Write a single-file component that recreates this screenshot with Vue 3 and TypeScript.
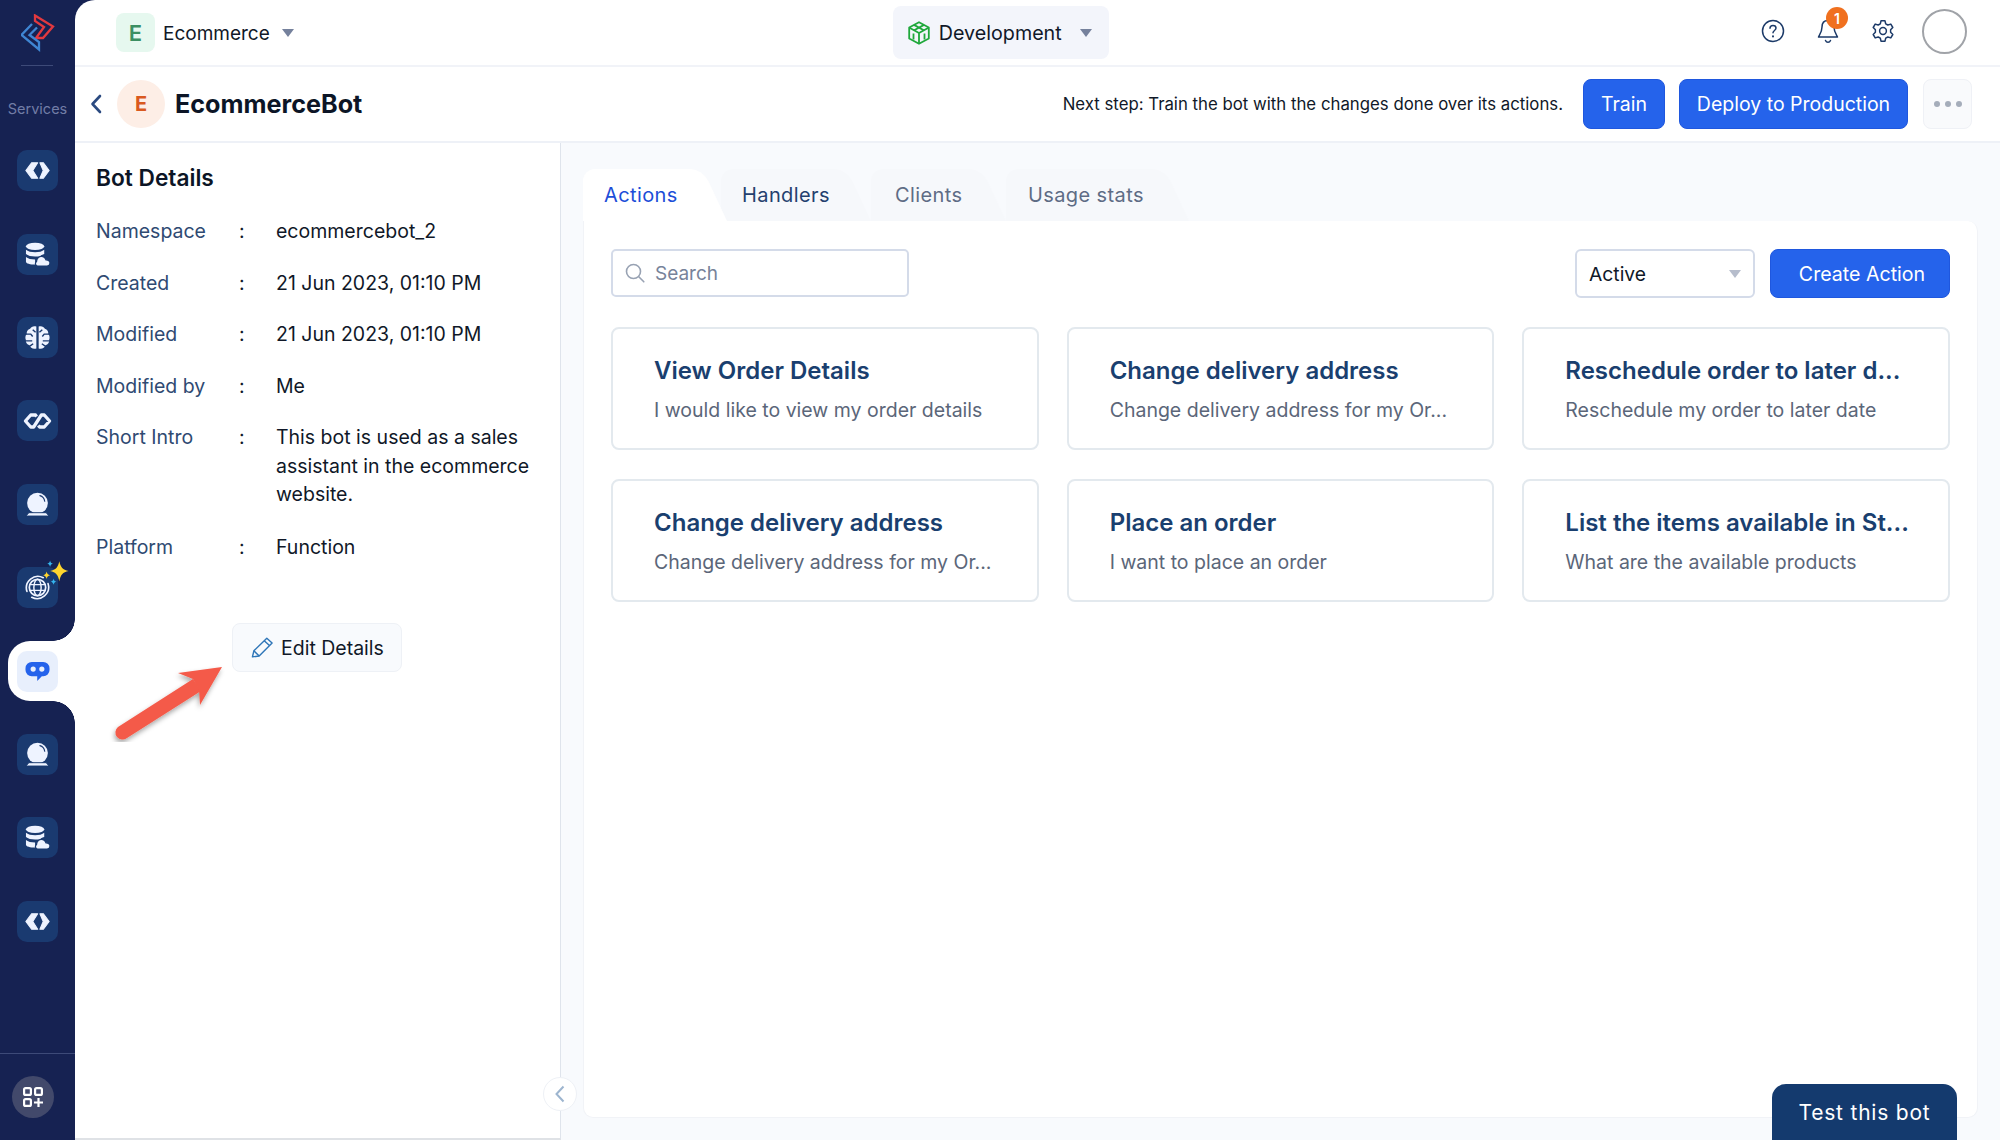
<script setup lang="ts">
  interface Detail {
    label: string
    value: string
  }

  interface ActionCard {
    title: string
    text: string
  }

  interface RailItem {
    icon: string
    active?: boolean
    sparkle?: boolean
  }

  const railItems: RailItem[] = [
    { icon: 'code' },
    { icon: 'db' },
    { icon: 'brain' },
    { icon: 'link' },
    { icon: 'ball' },
    { icon: 'globe', sparkle: true },
    { icon: 'chat', active: true },
    { icon: 'ball' },
    { icon: 'db' },
    { icon: 'code' },
  ]

  const details: Detail[] = [
    { label: 'Namespace', value: 'ecommercebot_2' },
    { label: 'Created', value: '21 Jun 2023, 01:10 PM' },
    { label: 'Modified', value: '21 Jun 2023, 01:10 PM' },
    { label: 'Modified by', value: 'Me' },
    { label: 'Short Intro', value: 'This bot is used as a sales assistant in the ecommerce website.' },
    { label: 'Platform', value: 'Function' },
  ]

  const tabs = ['Actions', 'Handlers', 'Clients', 'Usage stats']

  const cards: ActionCard[] = [
    { title: 'View Order Details', text: 'I would like to view my order details' },
    { title: 'Change delivery address', text: 'Change delivery address for my Or...' },
    { title: 'Reschedule order to later d...', text: 'Reschedule my order to later date' },
    { title: 'Change delivery address', text: 'Change delivery address for my Or...' },
    { title: 'Place an order', text: 'I want to place an order' },
    { title: 'List the items available in St...', text: 'What are the available products' },
  ]
</script>

<template>
  <div class="app">
    <svg class="defs" width="0" height="0">
      <symbol id="i-code" viewBox="0 0 24 24">
        <path fill="currentColor" stroke="currentColor" stroke-width="1" stroke-linejoin="round" d="M.8 12 6.500 4.500h5.700L7.500 12l4.700 7.500H6.500zM23.200 12l-5.700-7.500h-3.200L17.500 12l-3.200 7.500h3.200z" />
      </symbol>
      <symbol id="i-db" viewBox="0 0 26 26">
        <ellipse cx="10.500" cy="4.500" rx="9.500" ry="3.800" fill="currentColor" />
        <path fill="currentColor" d="M1 8c2 1.800 5.500 2.600 9.500 2.600S18 9.800 20 8v4.600c-1.400.3-3 1-4.200 2.200-1.600.3-3.400.4-5.300.4-4 0-7.500-.8-9.500-2.600z" />
        <path fill="currentColor" d="M1 15.600c2 1.800 5.500 2.600 9.500 2.600v5.300c-5 0-9.500-1.200-9.500-3z" />
        <path fill="currentColor" stroke="#1a3a70" stroke-width="1.300" d="M13.500 25c-2.500 0-3.600-3-1.500-4.700 0-3 2.500-5.300 5-5.300 2.200 0 4 1.300 4.800 3.500 2.500-.1 4.200 1.600 4.200 3.400 0 1.800-1.300 3.100-3 3.100z" />
      </symbol>
      <symbol id="i-brain" viewBox="0 0 26 26">
        <path fill="currentColor" d="M11.800 1.500v23c-3.500 1-6.300-.8-7-3.500-2.800-.8-4.300-3-3.800-5.200-1-2.300-.8-4.800.8-6.500-.3-2.800 1-4.800 3.500-5.500C6.500 1.500 9 .7 11.800 1.500zM14.200 1.500c2.800-.8 5.300 0 6.500 2.300 2.500.7 3.800 2.700 3.500 5.500 1.600 1.700 1.800 4.200.8 6.500.5 2.200-1 4.400-3.800 5.200-.7 2.700-3.500 4.500-7 3.500z" />
        <path fill="none" stroke="#1a3a70" stroke-width="1.500" d="M1 9.500h5l2 2.500M1 16.500h6.500M5 22l3.500-2.500M25 9.500h-5L18 12M25 16.500h-6.500M21 22l-3.500-2.500M8 5l3 2.500M18 5l-3 2.500" />
      </symbol>
      <symbol id="i-link" viewBox="0 0 30 18">
        <path fill="none" stroke="currentColor" stroke-width="3.400" stroke-linejoin="round" d="M14 4.500 13 2.800H8L2.500 9 8 15.200h3l8-12.400h3L27.500 9 22 15.200h-5l-1-1.700" />
      </symbol>
      <symbol id="i-ball" viewBox="0 0 26 26">
        <circle cx="13" cy="11.500" r="10.800" fill="currentColor" />
        <path fill="none" stroke="#1a3a70" stroke-width="1.200" stroke-linecap="round" d="M15.500 3.800c2.800.8 4.600 3 5 5.800" />
        <path fill="currentColor" stroke="#1a3a70" stroke-width="1" d="M4 21.500h18l3 3.500H1z" />
      </symbol>
      <symbol id="i-globe" viewBox="0 0 26 26">
        <circle cx="13" cy="13" r="8.500" fill="none" stroke="currentColor" stroke-width="1.800" />
        <ellipse cx="13" cy="13" rx="3.800" ry="8.500" fill="none" stroke="currentColor" stroke-width="1.500" />
        <path fill="none" stroke="currentColor" stroke-width="1.500" d="M5 10h16M5 16h16" />
        <path fill="none" stroke="currentColor" stroke-width="1.700" stroke-linecap="round" d="M19 2.800A12 12 0 0 0 2 17M7 23.200A12 12 0 0 0 24 9" />
      </symbol>
      <symbol id="i-chat" viewBox="0 0 26 22">
        <path fill="currentColor" d="M7 1h12a6.500 6.500 0 0 1 6.500 6.500v2A6.500 6.500 0 0 1 19 16h-1.500l-4.800 5v-5H7A6.500 6.500 0 0 1 .5 9.500v-2A6.500 6.500 0 0 1 7 1z" />
        <circle cx="8.500" cy="8.500" r="2.700" fill="#e8effc" />
        <circle cx="17.500" cy="8.500" r="2.700" fill="#e8effc" />
      </symbol>
    </svg>

    <aside class="rail">
      <svg class="logo" viewBox="11 9 34 38" width="34" height="38">
        <path fill="none" stroke="#e2393f" stroke-width="2.300" stroke-linejoin="miter" d="M25 10.500 43 21.500 33 33h-7l8-11-9-6z" />
        <path fill="none" stroke="#3f86d3" stroke-width="2.300" stroke-linejoin="miter" d="M22 19 11.500 30 29 44.500V37l-9.500-7L27 22.500" />
      </svg>
      <div class="rail-line"></div>
      <div class="rail-label">Services</div>
      <nav class="rail-nav">
        <div v-for="(item, i) in railItems" :key="i" class="rail-item" :class="{ active: item.active }">
          <span class="tile">
            <svg v-if="item.icon === 'link'" class="glyph glyph-wide"><use href="#i-link" /></svg>
            <svg v-else class="glyph"><use :href="`#i-${item.icon}`" /></svg>
          </span>
          <svg v-if="item.sparkle" class="sparkle" viewBox="0 0 26 26" width="30" height="30">
            <path fill="#ffd52e" d="M15 1c1 5 3 7.500 8 8.500-5 1-7 3.500-8 9-1-5.500-3-8-8-9 5-1 7-3.500 8-8.500z" />
            <path fill="#ffd52e" d="M4 10c.4 2 1.200 2.800 3 3.200-1.800.4-2.600 1.200-3 3.200-.4-2-1.200-2.800-3-3.200 1.800-.4 2.600-1.200 3-3.200z" />
            <path fill="#35b5ee" d="M7 .5c.3 1.700 1 2.500 2.500 2.800C8 3.600 7.300 4.400 7 6c-.3-1.600-1-2.400-2.500-2.700C6 3 6.700 2.200 7 .5zM10 16c.3 1.700 1 2.500 2.500 2.800-1.500.3-2.200 1.100-2.500 2.700-.3-1.600-1-2.400-2.500-2.700C9 18.500 9.700 17.700 10 16z" />
          </svg>
        </div>
      </nav>
      <div class="rail-foot">
        <span class="apps">
          <svg viewBox="0 0 20 20" width="20" height="20">
            <g fill="none" stroke="#fff" stroke-width="2.200">
              <rect x="1.100" y="1.100" width="6.800" height="6.800" rx="1.500" />
              <rect x="12.100" y="1.100" width="6.800" height="6.800" rx="1.500" />
              <rect x="1.100" y="12.100" width="6.800" height="6.800" rx="1.500" />
              <path d="M15.500 11v9M11 15.500h9" />
            </g>
          </svg>
        </span>
      </div>
    </aside>

    <main class="main">
      <header class="topbar">
        <span class="org-tile">E</span>
        <span class="org-name">Ecommerce</span>
        <i class="caret"></i>
        <div class="env">
          <svg viewBox="0 0 22 24" width="22" height="24">
            <g fill="none" stroke="#1fa83b" stroke-width="1.800" stroke-linejoin="round">
              <path d="M11 1.200 20.800 6.500v11L11 22.800 1.200 17.500v-11z" />
              <path d="M1.500 6.700 11 12l9.500-5.300M11 12v10.500M6 3.900l9.800 5.400M16 3.900 6.200 9.300M5.500 12.500v6M16.500 12.500v6" />
            </g>
          </svg>
          <span class="env-name">Development</span>
          <i class="caret"></i>
        </div>
        <div class="top-icons">
          <svg viewBox="0 0 24 24" width="24" height="24" fill="none" stroke="#1c3a68" stroke-width="1.500" stroke-linecap="round">
            <circle cx="12" cy="12" r="10.500" />
            <path d="M9 9.300c0-1.700 1.300-2.800 3-2.800s3 1.100 3 2.600c0 2.400-3 2.400-3 4.700" />
            <path d="M12 17.300v.2" stroke-width="2" />
          </svg>
          <span class="bell">
            <svg viewBox="0 0 24 26" width="24" height="26" fill="none" stroke="#1c3a68" stroke-width="1.500" stroke-linejoin="round">
              <path d="M12 2.500c-3.800 0-6 2.700-6 6.500 0 5-2.500 8-3.500 10h19c-1-2-3.500-5-3.500-10 0-3.800-2.200-6.500-6-6.500z" />
              <path d="M9.500 22.500c.5 1.200 1.300 1.800 2.500 1.800s2-.6 2.500-1.800" stroke-linecap="round" />
            </svg>
            <b class="badge">1</b>
          </span>
          <svg viewBox="0 0 24 24" width="24" height="24" fill="none" stroke="#1c3a68" stroke-width="1.500" stroke-linejoin="round">
            <circle cx="12" cy="12" r="3.400" />
            <path d="M10 1.800h4l.7 3 2.100 1.200 3-.9 2 3.400-2.200 2.200v2.600l2.200 2.200-2 3.400-3-.9-2.100 1.200-.7 3h-4l-.7-3-2.100-1.200-3 .9-2-3.400 2.200-2.200v-2.600L2.200 8.500l2-3.400 3 .9 2.100-1.200z" />
          </svg>
          <span class="avatar"></span>
        </div>
      </header>

      <section class="botbar">
        <svg class="back" viewBox="0 0 12 20" width="12" height="20" fill="none" stroke="#2b4a80" stroke-width="2.600" stroke-linecap="round" stroke-linejoin="round">
          <path d="M10 2 2.500 10l7.500 8" />
        </svg>
        <span class="bot-avatar">E</span>
        <h1 class="bot-name">EcommerceBot</h1>
        <span class="next-step">Next step: Train the bot with the changes done over its actions.</span>
        <button class="btn btn-train">Train</button>
        <button class="btn btn-deploy">Deploy to Production</button>
        <button class="btn-more"><i></i><i></i><i></i></button>
      </section>

      <div class="body">
        <section class="details">
          <h2 class="details-title">Bot Details</h2>
          <div v-for="row in details" :key="row.label" class="detail-row">
            <span class="detail-label">{{ row.label }}</span>
            <span class="detail-colon">:</span>
            <span class="detail-value">{{ row.value }}</span>
          </div>
          <button class="edit-btn">
            <svg viewBox="0 0 24 24" width="23" height="23" fill="none" stroke="#2f76b8" stroke-width="1.500" stroke-linejoin="round">
              <path d="M1.500 21.800 3 15.500 16.500 2.300l5.500 5L8.500 20.800z" />
              <path d="M13.800 5l5.500 5M3 15.500l5.500 5.300" />
            </svg>
            Edit Details
          </button>
          <svg class="arrow" viewBox="0 0 120 82" width="120" height="82">
            <defs>
              <filter id="arrow-shadow" x="-20%" y="-20%" width="140%" height="150%">
                <feDropShadow dx="-1" dy="3" stdDeviation="2.500" flood-color="#000" flood-opacity="0.35" />
              </filter>
            </defs>
            <g filter="url(#arrow-shadow)">
              <path fill="#f45a49" d="M9 67 84 19 92 31 18 78a6.500 6.500 0 0 1-9-11z" />
              <path fill="#f45a49" d="M113 7 69 13 84 19 90 30 91 45z" />
            </g>
          </svg>
          <span class="collapse">
            <svg viewBox="0 0 10 18" width="10" height="18" fill="none" stroke="#9db5cf" stroke-width="2">
              <path d="M8.500 1.500 1.500 9l7 7.500" />
            </svg>
          </span>
        </section>

        <section class="content">
          <div class="tabs">
            <div v-for="(tab, i) in tabs" :key="tab" class="tab" :class="[`tab-${i}`, { current: i === 0 }]">
              <span>{{ tab }}</span>
            </div>
          </div>
          <div class="panel">
            <div class="toolbar">
              <div class="search">
                <svg viewBox="0 0 20 20" width="20" height="20" fill="none" stroke="#98a2b3" stroke-width="1.600" stroke-linecap="round">
                  <circle cx="8.500" cy="8.500" r="7" />
                  <path d="m13.800 13.800 5 5" />
                </svg>
                <span>Search</span>
              </div>
              <div class="select">
                <span>Active</span>
                <i class="caret caret-light"></i>
              </div>
              <button class="btn btn-create">Create Action</button>
            </div>
            <div class="cards">
              <article v-for="(card, i) in cards" :key="i" class="card">
                <h3 class="card-title">{{ card.title }}</h3>
                <p class="card-text">{{ card.text }}</p>
              </article>
            </div>
          </div>
          <button class="test-btn">Test this bot</button>
        </section>
      </div>
    </main>
  </div>
</template>

<style scoped>
  .app {
    display: flex;
    height: 1140px;
    overflow: hidden;
    background: #162252;
    font-family: Inter, "Noto Sans", sans-serif;
    color: #101828;
  }

  .defs {
    position: absolute;
  }

  button {
    font-family: inherit;
    cursor: pointer;
  }

  .rail {
    flex: 0 0 75px;
    display: flex;
    flex-direction: column;
    width: 75px;
    position: relative;
    z-index: 2;
  }

  .logo {
    margin: 14px 0 0 21px;
  }

  .rail-line {
    width: 32px;
    height: 1px;
    margin: 13px 0 0 21px;
    background: #3d4a78;
  }

  .rail-label {
    margin-top: 34px;
    text-align: center;
    font-size: 14.500px;
    line-height: 18px;
    color: #727da6;
  }

  .rail-nav {
    margin-top: 11px;
    display: flex;
    flex-direction: column;
    flex: 1;
  }

  .rail-item {
    position: relative;
    height: 83.400px;
    padding-left: 17px;
    display: flex;
    align-items: center;
  }

  .tile {
    position: relative;
    z-index: 1;
    width: 41px;
    height: 41px;
    border-radius: 10px;
    display: flex;
    align-items: center;
    justify-content: center;
    background: #1a3a70;
    color: #eef3ff;
  }

  .glyph {
    width: 25px;
    height: 25px;
  }

  .glyph-wide {
    width: 29px;
    height: 18px;
  }

  .sparkle {
    position: absolute;
    left: 42px;
    top: 14px;
    z-index: 2;
  }

  .rail-item.active .tile {
    background: #e8effc;
    color: #2563eb;
  }

  .rail-item.active::before {
    content: "";
    position: absolute;
    left: 8px;
    right: 0;
    top: 12px;
    bottom: 12px;
    background: #fff;
    border-radius: 22px 0 0 22px;
  }

  .rail-item.active::after {
    content: "";
    position: absolute;
    right: 0;
    top: -10px;
    bottom: -10px;
    width: 22px;
    background:
      radial-gradient(circle at 0 0, #162252 21.500px, #fff 22px) top / 100% 22px no-repeat,
      radial-gradient(circle at 0 100%, #162252 21.500px, #fff 22px) bottom / 100% 22px no-repeat;
  }

  .rail-foot {
    border-top: 1px solid #3d4a78;
    height: 87px;
    box-sizing: border-box;
    padding: 22px 0 0 12px;
  }

  .apps {
    width: 42px;
    height: 42px;
    border-radius: 50%;
    background: #42496b;
    display: flex;
    align-items: center;
    justify-content: center;
  }

  .main {
    flex: 1;
    min-width: 0;
    display: flex;
    flex-direction: column;
    background: #fff;
    border-top-left-radius: 20px;
  }

  .topbar {
    flex: 0 0 67px;
    box-sizing: border-box;
    display: flex;
    align-items: center;
    padding-left: 41px;
    border-bottom: 2px solid #f1f3f8;
    position: relative;
  }

  .org-tile {
    width: 39px;
    height: 39px;
    border-radius: 8px;
    background: #e6f8ef;
    color: #3b8f62;
    font-size: 22px;
    font-weight: 600;
    display: flex;
    align-items: center;
    justify-content: center;
  }

  .org-name {
    margin-left: 8px;
    padding-top: 2px;
    font-size: 19px;
  }

  .caret {
    display: block;
    width: 0;
    height: 0;
    border-left: 6px solid transparent;
    border-right: 6px solid transparent;
    border-top: 8px solid #75819c;
    margin-left: 12px;
  }

  .caret-light {
    border-top-color: #b6bdcc;
    margin-left: auto;
  }

  .env {
    margin-left: 599px;
    width: 216px;
    height: 53px;
    border-radius: 8px;
    background: #f3f5fb;
    display: flex;
    align-items: center;
    padding-left: 15px;
    box-sizing: border-box;
    gap: 9px;
    font-size: 19.700px;
  }

  .env-name {
    padding-top: 1px;
  }

  .env .caret {
    margin-left: 9px;
  }

  .top-icons {
    margin: 0 33px 3px auto;
    display: flex;
    align-items: center;
    gap: 31px;
  }

  .bell {
    position: relative;
    display: flex;
  }

  .badge {
    position: absolute;
    left: 10px;
    top: -11px;
    width: 22px;
    height: 22px;
    border-radius: 50%;
    background: #f0701f;
    color: #fff;
    font-size: 14px;
    font-weight: 600;
    display: flex;
    align-items: center;
    justify-content: center;
  }

  .avatar {
    width: 45px;
    height: 45px;
    box-sizing: border-box;
    border: 2px solid #a0a3a8;
    border-radius: 50%;
    margin-left: -4px;
  }

  .botbar {
    flex: 0 0 76px;
    box-sizing: border-box;
    display: flex;
    align-items: center;
    padding: 0 28px 0 15px;
    border-bottom: 2px solid #eef1f7;
  }

  .back {
    flex: none;
  }

  .bot-avatar {
    margin-left: 15px;
    width: 48px;
    height: 48px;
    border-radius: 50%;
    background: #fdeee6;
    color: #d9591f;
    font-size: 20px;
    font-weight: 700;
    display: flex;
    align-items: center;
    justify-content: center;
  }

  .bot-name {
    margin: 0 0 0 10px;
    font-size: 25.200px;
    font-weight: 700;
    color: #0c1526;
  }

  .next-step {
    margin-left: auto;
    font-size: 16.800px;
    color: #101828;
  }

  .btn {
    border: 1px solid #1f57de;
    border-radius: 8px;
    background: #2563eb;
    color: #fff;
    font-size: 19.500px;
    height: 50px;
    padding: 0;
  }

  .btn-train {
    margin-left: 20px;
    width: 82px;
  }

  .btn-deploy {
    margin-left: 14px;
    width: 229px;
  }

  .btn-more {
    margin-left: 15px;
    width: 49px;
    height: 50px;
    border: 1px solid #eff1f6;
    border-radius: 8px;
    background: #f9fafc;
    display: flex;
    align-items: center;
    justify-content: center;
    gap: 5px;
    padding: 0;
  }

  .btn-more i {
    width: 6px;
    height: 6px;
    border-radius: 50%;
    background: #a5adba;
  }

  .body {
    flex: 1;
    min-height: 0;
    display: flex;
  }

  .details {
    flex: 0 0 486px;
    box-sizing: border-box;
    padding: 20px 18px 0 21px;
    border-right: 1px solid #dfe4ec;
    border-bottom: 2px solid #dfe2e6;
    position: relative;
  }

  .details-title {
    margin: 0 0 24px;
    font-size: 22.700px;
    line-height: 30px;
    font-weight: 600;
    color: #0c1526;
  }

  .detail-row {
    display: flex;
    font-size: 19.500px;
    line-height: 28.500px;
    margin-bottom: 23px;
  }

  .detail-row:last-of-type {
    margin-top: 24px;
  }

  .detail-label {
    flex: 0 0 143px;
    color: #2f4a72;
  }

  .detail-colon {
    flex: 0 0 37px;
    color: #101828;
  }

  .detail-value {
    flex: 1;
    color: #101828;
  }

  .edit-btn {
    margin: 62px 0 0 136px;
    width: 170px;
    height: 49px;
    border: 1px solid #eef1f6;
    border-radius: 8px;
    background: #f8fafd;
    color: #101828;
    font-size: 19.500px;
    display: flex;
    align-items: center;
    gap: 7px;
    padding: 0 0 0 18px;
  }

  .arrow {
    position: absolute;
    left: 34px;
    top: 517px;
  }

  .collapse {
    position: absolute;
    right: -17px;
    bottom: 27px;
    width: 34px;
    height: 34px;
    box-sizing: border-box;
    border-radius: 50%;
    border: 1px solid #eef1f6;
    background: #fff;
    display: flex;
    align-items: center;
    justify-content: center;
    z-index: 2;
  }

  .content {
    flex: 1;
    min-width: 0;
    position: relative;
    display: flex;
    flex-direction: column;
    padding: 26px 22px 22px 22px;
    background: #f8fafd;
  }

  .tabs {
    flex: 0 0 52px;
    display: flex;
    font-size: 20px;
    letter-spacing: 0.400px;
  }

  .tab {
    position: relative;
    height: 52px;
    display: flex;
    align-items: center;
    color: #24406e;
  }

  .tab span {
    position: relative;
    z-index: 1;
  }

  .tab::before,
  .tab::after {
    content: "";
    position: absolute;
    top: 0;
    bottom: 0;
    background: #f6f8fb;
  }

  .tab::before {
    left: 0;
    width: 60%;
    border-top-left-radius: 12px;
  }

  .tab::after {
    left: 40%;
    right: 0;
    border-top-right-radius: 12px;
    transform-origin: bottom right;
    transform: skewX(25deg);
  }

  .tab-0 {
    width: 144px;
    padding-left: 21px;
    box-sizing: border-box;
    z-index: 2;
    color: #1d4ed8;
  }

  .tab.current::before,
  .tab.current::after {
    background: #fff;
  }

  .tab-1 {
    width: 150px;
    margin-left: -6px;
    padding-left: 21px;
    box-sizing: border-box;
    z-index: 1;
  }

  .tab-2 {
    width: 135px;
    padding-left: 24px;
    box-sizing: border-box;
    color: #5e6c85;
  }

  .tab-3 {
    width: 183px;
    padding-left: 22px;
    box-sizing: border-box;
    color: #5e6c85;
  }

  .panel {
    flex: 1;
    background: #fff;
    border: 1px solid #f1f3f7;
    border-top: 0;
    border-radius: 0 10px 10px 10px;
    padding: 28px 27px 0 27px;
  }

  .toolbar {
    display: flex;
    align-items: flex-start;
  }

  .search {
    width: 298px;
    height: 48px;
    box-sizing: border-box;
    border: 2px solid #d4dbe9;
    border-radius: 5px;
    display: flex;
    align-items: center;
    gap: 10px;
    padding-left: 12px;
    font-size: 19px;
    color: #77839a;
  }

  .select {
    margin-left: auto;
    width: 180px;
    height: 49px;
    box-sizing: border-box;
    border: 2px solid #d4dbe9;
    border-radius: 6px;
    display: flex;
    align-items: center;
    padding: 0 12px;
    font-size: 19.300px;
    color: #101828;
  }

  .btn-create {
    margin-left: 15px;
    width: 180px;
    height: 49px;
    padding-left: 4px;
    font-size: 19.600px;
  }

  .cards {
    margin-top: 29px;
    display: grid;
    grid-template-columns: repeat(3, 1fr);
    gap: 29px 28px;
  }

  .card {
    height: 123px;
    box-sizing: border-box;
    border: 2px solid #e3e9ee;
    border-radius: 8px;
    padding: 26px 10px 0 41px;
  }

  .card-title {
    margin: 0;
    font-size: 24px;
    line-height: 32px;
    font-weight: 600;
    color: #1a3f6f;
    white-space: nowrap;
  }

  .card-text {
    margin: 10px 0 0;
    font-size: 19.500px;
    line-height: 26px;
    color: #5b6679;
    white-space: nowrap;
  }

  .test-btn {
    position: absolute;
    right: 43px;
    bottom: -10px;
    width: 185px;
    height: 66px;
    border: 0;
    border-radius: 14px 14px 0 0;
    background: #143a6e;
    color: #fff;
    font-size: 21px;
    letter-spacing: 0.800px;
    padding: 0 0 10px;
  }
</style>

<style>
  html,
  body {
    margin: 0;
    overflow: hidden;
  }
</style>
